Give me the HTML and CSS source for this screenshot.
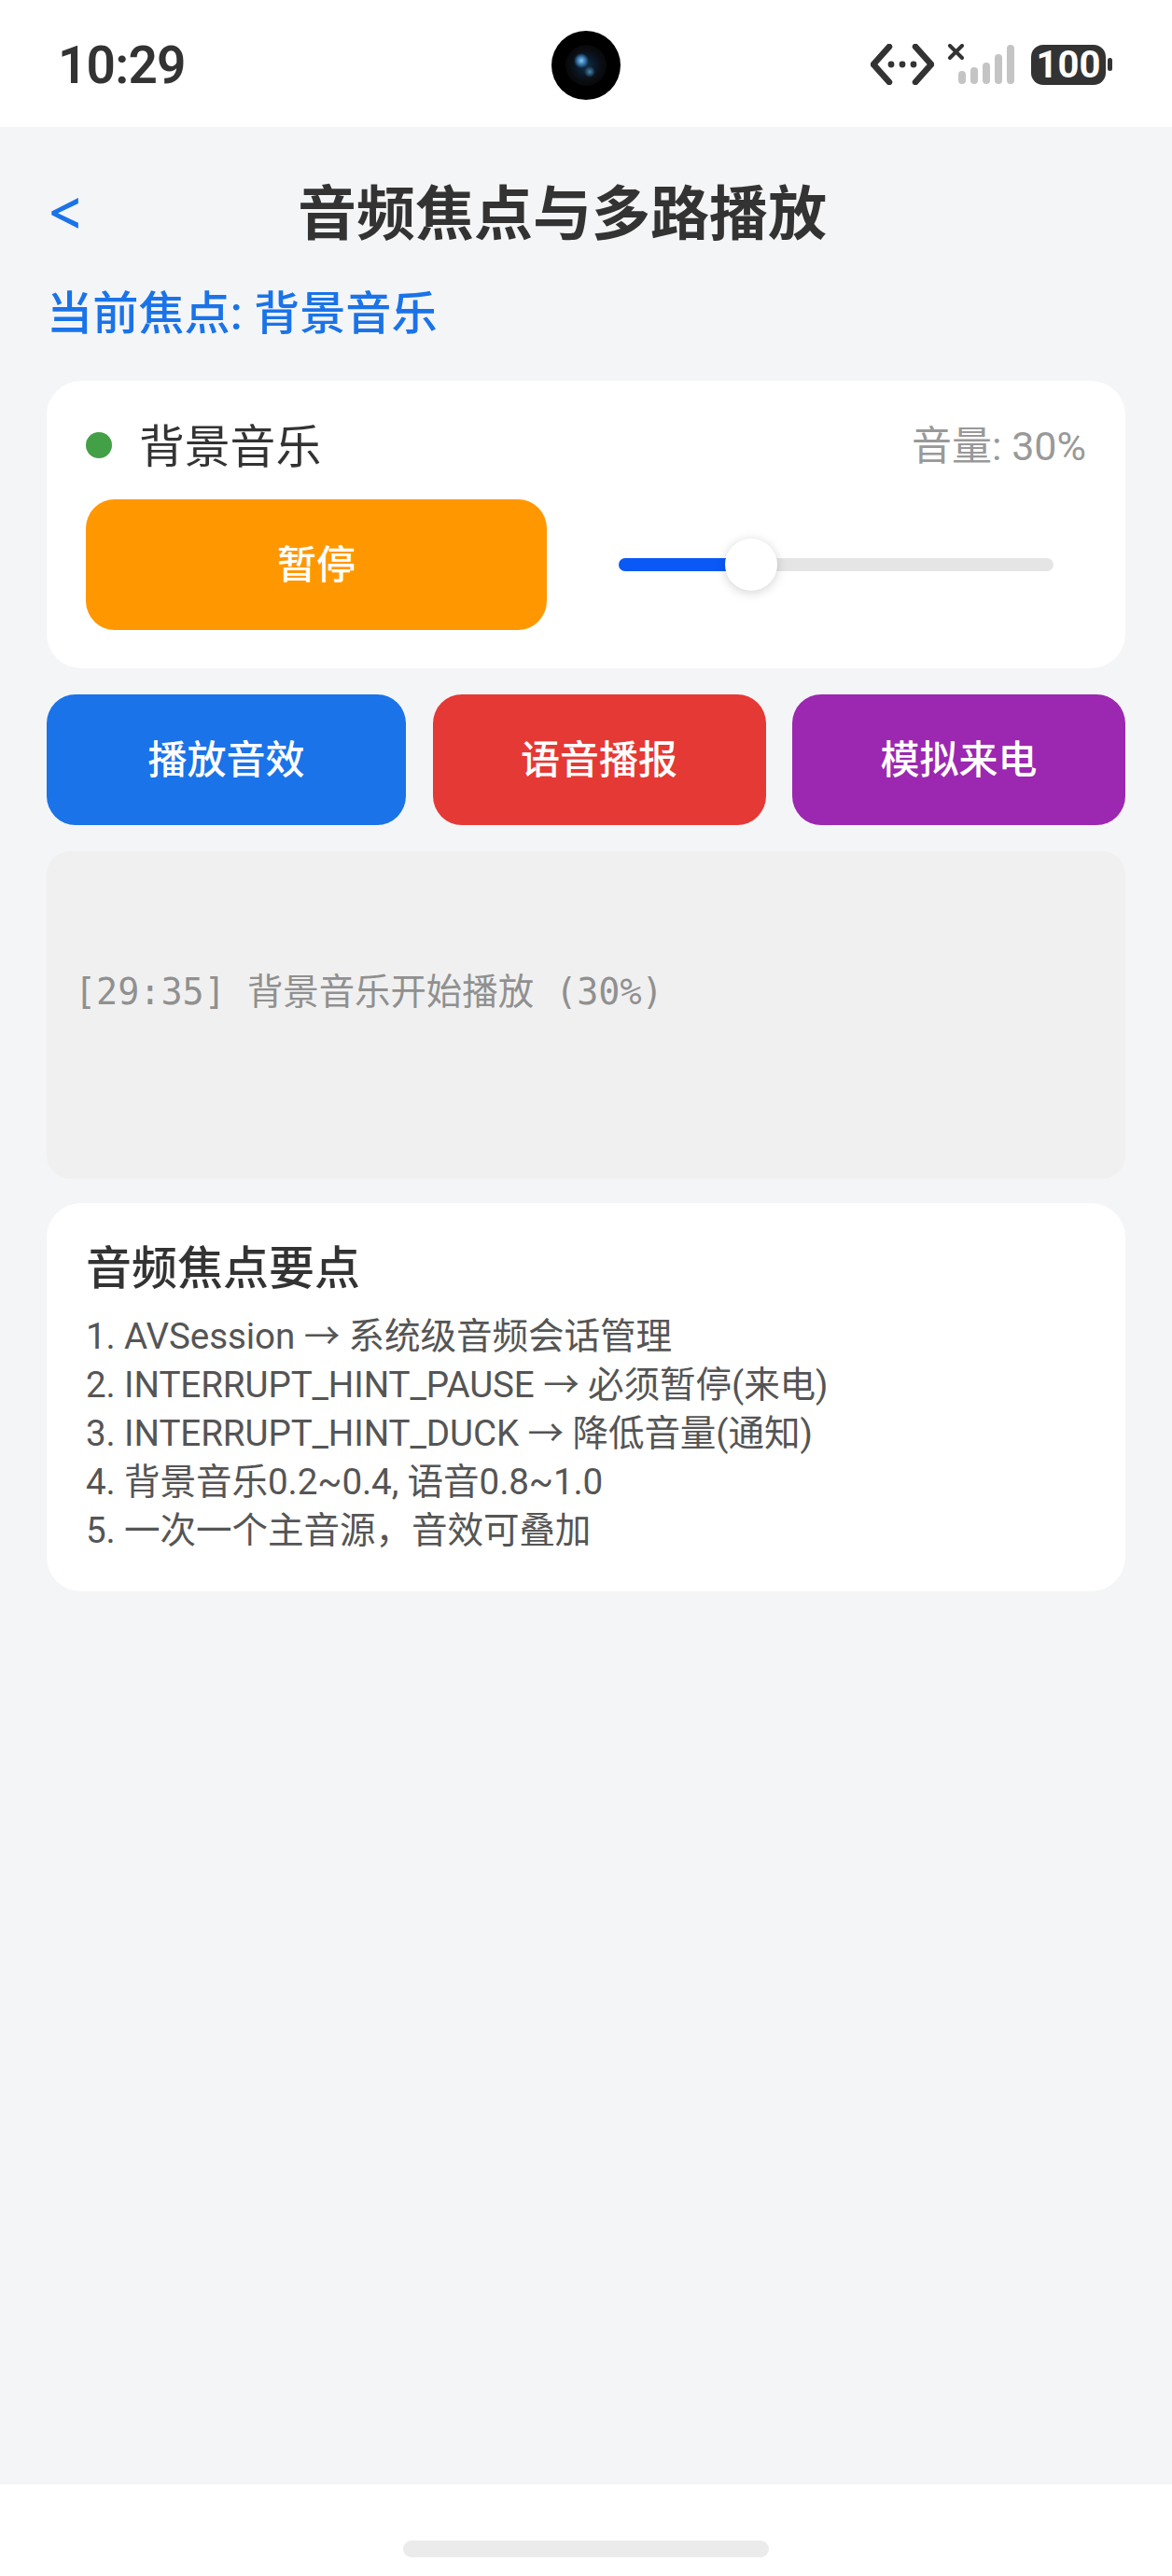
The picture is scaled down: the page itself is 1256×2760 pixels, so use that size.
FILE: index.html
```html
<!DOCTYPE html>
<html lang="zh-CN">
<head>
	<title>音频焦点与多路播放</title>
	<meta charset="utf-8">
	<link rel="stylesheet" href="styles.css">
</head>
<body>
	<div class="status">
		<span class="time">10:29</span>
		<div class="camera"><i class="lens"></i></div>
		<div class="status-icons">
			<svg class="icon-link" width="68" height="44" viewBox="0 0 68 44">
				<path d="M20 3 L3 22 L20 41 M48 3 L65 22 L48 41" fill="none" stroke="#333" stroke-width="6.5" stroke-linecap="round" stroke-linejoin="round"/>
				<circle cx="22" cy="22" r="3.4" fill="#333"/>
				<circle cx="34" cy="22" r="3.4" fill="#333"/>
				<circle cx="46" cy="22" r="3.4" fill="#333"/>
			</svg>
			<svg class="icon-signal" width="72" height="44" viewBox="0 0 72 44">
				<path d="M3 2 L16 15 M16 2 L3 15" stroke="#333" stroke-width="4" stroke-linecap="round"/>
				<rect x="12" y="29" width="8" height="14" rx="4" fill="#c4c4c4"/>
				<rect x="25" y="25" width="8" height="18" rx="4" fill="#c4c4c4"/>
				<rect x="38" y="20" width="8" height="23" rx="4" fill="#c4c4c4"/>
				<rect x="51" y="11" width="8" height="32" rx="4" fill="#c4c4c4"/>
				<rect x="64" y="1" width="8" height="42" rx="4" fill="#c4c4c4"/>
			</svg>
			<div class="battery"><span class="battery-num">100</span></div>
			<i class="battery-nub"></i>
		</div>
	</div>

	<div class="main">
		<div class="header">
			<span class="back">&lt;</span>
			<span class="title">音频焦点与多路播放</span>
		</div>
		<div class="focus">当前焦点: 背景音乐</div>

		<div class="card music">
			<div class="music-top">
				<i class="dot"></i>
				<span class="music-name">背景音乐</span>
				<span class="volume">音量: 30%</span>
			</div>
			<div class="music-bottom">
				<button class="btn btn-pause">暂停</button>
				<div class="slider">
					<div class="track">
						<div class="fill" style="width: 30.5%"><i class="thumb"></i></div>
					</div>
				</div>
			</div>
		</div>

		<div class="actions">
			<button class="btn btn-blue">播放音效</button>
			<button class="btn btn-red">语音播报</button>
			<button class="btn btn-purple">模拟来电</button>
		</div>

		<div class="log">
			<span class="log-line">[29:35] 背景音乐开始播放 (30%)</span>
		</div>

		<div class="card info">
			<div class="info-title">音频焦点要点</div>
			<div class="info-line">1. AVSession → 系统级音频会话管理</div>
			<div class="info-line">2. INTERRUPT_HINT_PAUSE → 必须暂停(来电)</div>
			<div class="info-line">3. INTERRUPT_HINT_DUCK → 降低音量(通知)</div>
			<div class="info-line">4. 背景音乐0.2~0.4, 语音0.8~1.0</div>
			<div class="info-line">5. 一次一个主音源，音效可叠加</div>
		</div>
	</div>

	<div class="bottom">
		<i class="home-bar"></i>
	</div>
</body>
</html>
```

FILE: styles.css
```css
*{
	box-sizing: border-box;
}
body{
	margin: 0;
	height: 2760px;
	display: flex;
	flex-direction: column;
	background-color: #ffffff;
	font-family: "Roboto", "Noto Sans CJK SC", sans-serif;
	color: #333333;
}
i{
	display: block;
}

/*状态栏*/
.status{
	height: 136px;
	position: relative;
	display: flex;
	align-items: center;
	justify-content: space-between;
	padding: 0 64px 0 62px;
}
.time{
	margin-top: 3px;
	font-size: 55px;
	font-weight: 600;
	letter-spacing: -0.8px;
	color: #333333;
}
.camera{
	position: absolute;
	left: 591px;
	top: 33px;
	width: 74px;
	height: 74px;
	border-radius: 50%;
	background-color: #000000;
	display: flex;
	align-items: center;
	justify-content: center;
}
.lens{
	width: 44px;
	height: 44px;
	border-radius: 50%;
	background:
		radial-gradient(circle at 17px 17px, #8ccaf2 0, #3a7cb2 4px, rgba(20, 50, 80, 0) 8px),
		radial-gradient(circle at 26px 29px, #4d86ad 0, rgba(20, 50, 80, 0) 6px),
		radial-gradient(circle at 50% 50%, #12304c 0, #0a1a2a 30%, #0a0d10 55%, #000000 100%);
}
.status-icons{
	display: flex;
	align-items: center;
	margin-top: 2px;
}
.icon-signal{
	margin-left: 14px;
	margin-top: -1px;
}
.battery{
	width: 80px;
	height: 43px;
	margin-left: 18px;
	border-radius: 13px;
	background-color: #333333;
	display: flex;
	align-items: center;
	justify-content: center;
}
.battery-num{
	font-size: 40px;
	font-weight: 700;
	color: #ffffff;
}
.battery-nub{
	width: 5px;
	height: 14px;
	margin-left: 2px;
	border-radius: 3px;
	background-color: #333333;
}

/*主体*/
.main{
	flex: 1;
	background-color: #f4f5f7;
	padding: 0 50px;
}
.header{
	height: 180px;
	display: flex;
	align-items: center;
	padding-bottom: 5px;
}
.back{
	width: 269px;
	font-family: "Inter", sans-serif;
	font-size: 62px;
	color: #1a73e8;
}
.title{
	font-size: 63px;
	font-weight: 700;
	color: #333333;
}
.focus{
	height: 109px;
	margin-top: -16px;
	font-size: 49.2px;
	font-weight: 500;
	line-height: 72px;
	color: #1a73e8;
}
.card{
	background-color: #ffffff;
	border-radius: 37px;
}

/*背景音乐卡片*/
.music{
	height: 308px;
	margin-top: -1px;
	padding: 37px 42px 0 42px;
}
.music-top{
	height: 64px;
	display: flex;
	align-items: center;
}
.dot{
	width: 28px;
	height: 28px;
	border-radius: 50%;
	background-color: #43a047;
}
.music-name{
	margin: -6px 0 0 29px;
	font-size: 48.8px;
	color: #333333;
}
.volume{
	margin: -6px 0 0 auto;
	font-size: 43px;
	color: #999999;
}
.music-bottom{
	display: flex;
	gap: 42px;
	margin-top: 26px;
}
.btn{
	border: none;
	border-radius: 31px;
	height: 140px;
	padding: 0 0 8px 0;
	font-family: inherit;
	font-size: 42px;
	font-weight: 500;
	color: #ffffff;
}
.btn-pause{
	width: 494px;
	background-color: #ff9800;
}
.btn-blue{
	background-color: #1a73e8;
}
.btn-red{
	background-color: #e53935;
}
.btn-purple{
	background-color: #9c27b0;
}

/*滑块*/
.slider{
	flex: 1;
	display: flex;
	align-items: center;
	padding: 0 35px;
}
.track{
	width: 100%;
	height: 14px;
	border-radius: 7px;
	background-color: #e5e5e5;
}
.fill{
	height: 14px;
	border-radius: 7px 0 0 7px;
	background-color: #0a59f7;
	position: relative;
}
.thumb{
	position: absolute;
	right: -28px;
	top: -21px;
	width: 56px;
	height: 56px;
	border-radius: 50%;
	background-color: #ffffff;
	box-shadow: 0 2px 12px rgba(0, 0, 0, 0.18);
}

/*三个按钮*/
.actions{
	display: grid;
	grid-template-columns: 385fr 357fr 357fr;
	gap: 28.5px;
	margin-top: 28px;
}

/*日志*/
.log{
	height: 351px;
	margin-top: 28px;
	padding: 126px 0 0 30px;
	border-radius: 25px;
	background-color: #f0f0f0;
}
.log-line{
	display: block;
	font-family: "DejaVu Sans Mono", "Noto Sans CJK SC", monospace;
	font-size: 38.4px;
	line-height: 50px;
	color: #909090;
}

/*要点*/
.info{
	height: 416px;
	margin-top: 26px;
	padding: 35px 42px 0 42px;
}
.info-title{
	height: 82px;
	font-size: 49px;
	font-weight: 500;
	line-height: 72px;
	color: #333333;
}
.info-line{
	height: 52px;
	font-size: 38.6px;
	line-height: 52px;
	letter-spacing: -0.1px;
	color: #555555;
}

/*底部*/
.bottom{
	height: 98px;
	display: flex;
	justify-content: center;
	padding-top: 60px;
}
.home-bar{
	width: 392px;
	height: 18px;
	border-radius: 9px;
	background-color: #ebebeb;
}
```
